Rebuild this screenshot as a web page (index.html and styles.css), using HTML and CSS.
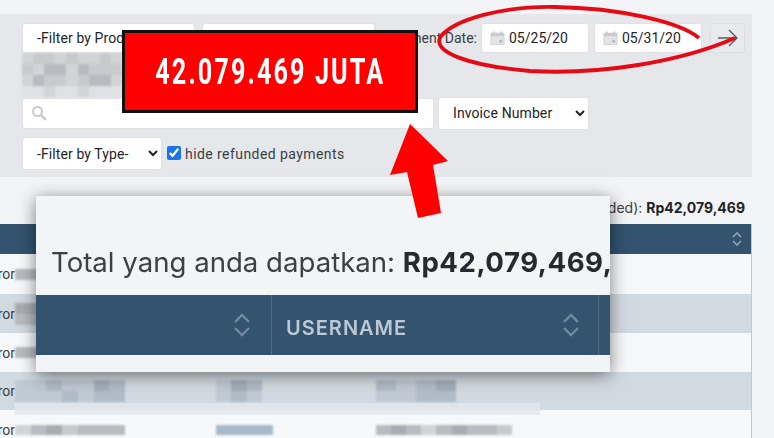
FILE: index.html
```html
<!DOCTYPE html>
<html lang="en">
<head>
    <meta charset="UTF-8">
    <meta name="viewport" content="width=device-width, initial-scale=1.0">
    <title>Payments</title>
    <link rel="stylesheet" href="styles.css">
</head>
<body>
    <div class="filters">
        <div class="filter-row top-row">
            <select class="field product-select"><option>-Filter by Product-</option></select>
            <select class="field product-select"><option>-Filter by Status-</option></select>
            <span class="date-label">Payment Date:</span>
            <div class="field date-field">
                <svg class="cal" viewBox="0 0 16 16"><path d="M1 3h14v12H1z" fill="#e3e4e6" stroke="#cfd1d4"/><path d="M1 2.5h14V6H1z" fill="#c9cbce"/><path d="M4 1v3M12 1v3" stroke="#c9cbce" stroke-width="2"/><rect x="10" y="10" width="3" height="3" fill="#b9bbbe"/></svg>
                05/25/20
            </div>
            <div class="field date-field">
                <svg class="cal" viewBox="0 0 16 16"><path d="M1 3h14v12H1z" fill="#e3e4e6" stroke="#cfd1d4"/><path d="M1 2.5h14V6H1z" fill="#c9cbce"/><path d="M4 1v3M12 1v3" stroke="#c9cbce" stroke-width="2"/><rect x="10" y="10" width="3" height="3" fill="#b9bbbe"/></svg>
                05/31/20
            </div>
            <button class="go-btn">
                <svg viewBox="0 0 22 18" width="22" height="18"><path d="M1 9h19M12 1l8 8-8 8" fill="none" stroke="#55595e" stroke-width="1.3"/></svg>
            </button>
        </div>
        <div class="mosaic top-mosaic">
            <i class="s1"></i><i class="s2"></i><i class="s2"></i><i class="s1"></i><i class="s2"></i><i class="s1"></i><i class="s1"></i><i class="s2"></i><i class="s1"></i>
            <i class="s2"></i><i class="s1"></i><i class="s3"></i><i class="s3"></i><i class="s1"></i><i class="s3"></i><i class="s2"></i><i class="s2"></i><i class="s2"></i>
            <i class="s1"></i><i class="s3"></i><i class="s2"></i><i class="s2"></i><i class="s1"></i><i class="s2"></i><i class="s3"></i><i class="s3"></i><i class="s1"></i>
            <i class="s0"></i><i class="s0"></i><i class="s1"></i><i class="s0"></i><i class="s0"></i><i class="s1"></i><i class="s0"></i><i class="s0"></i><i class="s0"></i>
        </div>
        <div class="filter-row search-row">
            <div class="field search-field">
                <svg viewBox="0 0 16 16" width="16" height="16"><circle cx="6.5" cy="6.5" r="4.5" fill="none" stroke="#c8cacd" stroke-width="2"/><path d="M10 10l5 5" stroke="#c8cacd" stroke-width="2.4"/></svg>
            </div>
            <select class="field number-select"><option>Invoice Number</option></select>
        </div>
        <div class="filter-row type-row">
            <select class="field type-select"><option>-Filter by Type-</option></select>
            <label class="hide-refunded"><input type="checkbox" checked>hide refunded payments</label>
        </div>
    </div>

    <div class="total-line">(rounded): <b>Rp42,079,469</b></div>

    <div class="table">
        <div class="thead">
            <svg class="sort" viewBox="0 0 12 16"><path d="M2 6l4-4 4 4M2 10l4 4 4-4" fill="none" stroke="#8ea2b4" stroke-width="1.6"/></svg>
        </div>
        <div class="trow tall"><span class="clip">ror</span><div class="mosaic cell-mosaic thin"><i class="s3"></i><i class="s3"></i></div></div>
        <div class="trow shade"><span class="clip">ror</span><div class="mosaic cell-mosaic"><i class="s4"></i><i class="s4"></i><i class="s3"></i><i class="s3"></i></div></div>
        <div class="trow"><span class="clip">ror</span><div class="mosaic cell-mosaic thin"><i class="s3"></i><i class="s3"></i></div></div>
        <div class="trow shade short">
            <span class="clip">ror</span>
            <div class="mosaic wide-mosaic">
                <i class="b1"></i><i class="b1"></i><i class="b2"></i><i class="b1"></i><i class="b1"></i><i class="b3"></i><i class="b2"></i>
                <i class="b1"></i><i class="b1"></i><i class="b1"></i><i class="b2"></i><i class="b1"></i><i class="b2"></i><i class="b2"></i>
            </div>
            <div class="mosaic mid-mosaic">
                <i class="b1"></i><i class="b3"></i><i class="b2"></i><i class="b1"></i><i class="b2"></i><i class="b1"></i>
            </div>
            <div class="mosaic end-mosaic">
                <i class="b2"></i><i class="b1"></i><i class="b2"></i><i class="b3"></i><i class="b1"></i><i class="b1"></i><i class="b2"></i><i class="b2"></i>
            </div>
            <div class="smear"></div>
        </div>
        <div class="trow">
            <span class="clip">ror</span>
            <div class="mosaic wide-mosaic thin"><i class="s1"></i><i class="s3"></i><i class="s4"></i><i class="s2"></i><i class="s3"></i><i class="s3"></i><i class="s3"></i></div>
            <div class="bar-link"></div>
            <div class="mosaic end-mosaic thin long"><i class="s3"></i><i class="s4"></i><i class="s3"></i><i class="s1"></i><i class="s3"></i><i class="s4"></i><i class="s3"></i><i class="s3"></i><i class="s2"></i></div>
        </div>
    </div>

    <!-- zoomed callout pasted over the table -->
    <div class="callout">
        <p class="callout-text">Total yang anda dapatkan: <b>Rp42,079,469,</b></p>
        <div class="callout-head">
            <div class="callout-col first">
                <svg viewBox="0 0 18 26" width="18" height="26"><path d="M2 10l7-7 7 7M2 16l7 7 7-7" fill="none" stroke="#6f8aa1" stroke-width="2.4"/></svg>
            </div>
            <div class="callout-col name">
                <span class="callout-label">USERNAME</span>
                <svg viewBox="0 0 18 26" width="18" height="26"><path d="M2 10l7-7 7 7M2 16l7 7 7-7" fill="none" stroke="#6f8aa1" stroke-width="2.4"/></svg>
            </div>
        </div>
    </div>

    <div class="banner"><span class="banner-text">42.079.469 JUTA</span></div>

    <svg class="marks" viewBox="0 0 774 438" width="774" height="438">
        <path d="M699 38C680 22 620 8 555 7C500 6 455 20 441 36C430 52 470 66 530 71C600 75 680 62 735 38" fill="none" stroke="#e60a14" stroke-width="3.8"/>
        <path d="M410 124L448 161L433 165L441 213L418 218L407 172L390 175Z" fill="#fe0000"/>
    </svg>
</body>
</html>
```

FILE: styles.css
```css
* {
    box-sizing: border-box;
}
html, body {
    height: 100%;
}
body {
    margin: 0;
    overflow: hidden;
    position: relative;
    background-color: #f3f4f6;
    font-family: Roboto, "Liberation Sans", sans-serif;
    font-size: 14px;
    color: #1f2328;
}
.filters {
    width: 752px;
    height: 163px;
    margin-top: 14px;
    padding: 9px 0 0 22px;
    background-color: #e5e7ea;
}
.filter-row {
    display: flex;
    align-items: center;
}
.field {
    background-color: #fff;
    border: 1px solid #dfe1e4;
    border-radius: 3px;
    font-family: inherit;
    font-size: 14px;
    color: #1f2328;
}
select.field {
    padding-left: 10px;
    letter-spacing: 0.1px;
}
.top-row {
    height: 30px;
}
.product-select {
    width: 173px;
    height: 30px;
    margin-right: 7px;
}
.date-label {
    width: 95px;
    margin-right: 4px;
    text-align: right;
    color: #3a3e43;
}
.date-field {
    display: flex;
    align-items: center;
    gap: 4px;
    width: 108px;
    height: 30px;
    margin-right: 5px;
    padding-left: 8px;
}
.date-field + .date-field {
    margin-right: 8px;
}
.cal {
    width: 15px;
    height: 16px;
}
.go-btn {
    display: flex;
    align-items: center;
    justify-content: center;
    width: 35px;
    height: 30px;
    padding: 0;
    background-color: #e9eaed;
    border: 1px solid #dcdee1;
    border-radius: 3px;
}
.mosaic {
    display: grid;
    filter: blur(1px);
}
.mosaic i {
    display: block;
}
.s0 { background-color: #dfe1e4; }
.s1 { background-color: #d2d4d8; }
.s2 { background-color: #c8cace; }
.s3 { background-color: #b8bbbf; }
.s4 { background-color: #a9acb0; }
.b1 { background-color: #c0cad3; }
.b2 { background-color: #b0bcc7; }
.b3 { background-color: #a3afba; }
.top-mosaic {
    width: 100px;
    height: 44px;
    grid-template-columns: repeat(9, 1fr);
    grid-template-rows: 11px 11px 11px 11px;
}
.search-row {
    height: 32px;
}
.search-field {
    display: flex;
    align-items: center;
    width: 412px;
    height: 31px;
    margin-right: 4px;
    padding-left: 8px;
}
.number-select {
    width: 151px;
    height: 33px;
}
.type-row {
    margin-top: 8px;
}
.type-select {
    width: 140px;
    height: 33px;
    margin-right: 5px;
}
.hide-refunded {
    display: flex;
    align-items: center;
    color: #3a3e43;
    letter-spacing: 0.43px;
}
.hide-refunded input {
    width: 14px;
    height: 14px;
    margin: 0 4px 2px 0;
    accent-color: #1a73e8;
}
.total-line {
    height: 47px;
    padding: 23px 29px 0 0;
    text-align: right;
    font-family: Inter, "Liberation Sans", sans-serif;
    font-size: 14px;
    line-height: 16px;
    color: #3a3e43;
}
.total-line b {
    color: #1f2328;
}
.table {
    width: 752px;
    background-color: #f7f8f9;
    border-right: 1px solid #c4c8cc;
}
.thead {
    display: flex;
    align-items: center;
    justify-content: flex-end;
    height: 30px;
    padding-right: 8px;
    background-color: #33536f;
}
.sort {
    width: 12px;
    height: 16px;
}
.trow {
    position: relative;
    display: flex;
    align-items: center;
    height: 39px;
}
.trow.tall {
    height: 40px;
}
.trow.short {
    height: 38px;
}
.trow.shade {
    background-color: #d2dae1;
}
.clip {
    width: 15px;
    overflow: hidden;
    direction: rtl;
    white-space: nowrap;
    color: #3a3e43;
}
.cell-mosaic {
    width: 24px;
    height: 22px;
    grid-template-columns: 1fr 1fr;
    grid-template-rows: 1fr 1fr;
}
.cell-mosaic.thin {
    height: 11px;
    grid-template-rows: 1fr;
}
.wide-mosaic {
    width: 110px;
    height: 22px;
    margin-right: 91px;
    grid-template-columns: repeat(7, 1fr);
    grid-template-rows: 1fr 1fr;
}
.wide-mosaic.thin {
    height: 10px;
    grid-template-rows: 1fr;
}
.mid-mosaic {
    width: 46px;
    height: 22px;
    margin-right: 114px;
    grid-template-columns: repeat(3, 1fr);
    grid-template-rows: 1fr 1fr;
}
.end-mosaic {
    width: 80px;
    height: 22px;
    grid-template-columns: repeat(4, 1fr);
    grid-template-rows: 1fr 1fr;
}
.end-mosaic.thin {
    height: 10px;
    grid-template-columns: repeat(9, 1fr);
    grid-template-rows: 1fr;
}
.end-mosaic.long {
    width: 136px;
}
.bar-link {
    width: 57px;
    height: 10px;
    margin-right: 103px;
    background-color: #a9b9c9;
    filter: blur(1px);
}
.smear {
    position: absolute;
    left: 15px;
    top: 31px;
    width: 525px;
    height: 12px;
    background-color: rgba(226, 231, 236, 0.8);
}
.callout {
    position: absolute;
    left: 36px;
    top: 196px;
    width: 574px;
    height: 176px;
    overflow: hidden;
    background-color: #f3f4f6;
    box-shadow: 0 3px 16px rgba(0, 0, 0, 0.5);
}
.callout-text {
    height: 99px;
    margin: 0;
    padding: 50px 0 0 15px;
    white-space: nowrap;
    font-family: Inter, "Liberation Sans", sans-serif;
    font-size: 27.6px;
    line-height: 32px;
    color: #3c4044;
    filter: blur(0.5px);
}
.callout-text b {
    letter-spacing: 0.5px;
    color: #26292d;
}
.callout-head {
    display: flex;
    height: 60px;
    background-color: #33536f;
    filter: blur(0.4px);
}
.callout-col {
    display: flex;
    align-items: center;
    justify-content: flex-end;
    padding-right: 20px;
    border-right: 1px solid #4f6c85;
}
.callout-col.first {
    width: 236px;
}
.callout-col.name {
    justify-content: space-between;
    width: 327px;
    padding: 0 18px 0 14px;
    font-family: Inter, "Liberation Sans", sans-serif;
    font-size: 20px;
    font-weight: 600;
    letter-spacing: 1px;
    color: #bcc8d3;
}
.callout-label {
    padding-top: 6px;
}
.banner {
    position: absolute;
    left: 122px;
    top: 30px;
    display: flex;
    align-items: center;
    justify-content: center;
    width: 296px;
    height: 83px;
    border: 3px solid #111;
    background-color: #fe0000;
    color: #fff;
}
.banner-text {
    flex: none;
    white-space: nowrap;
    font-family: Roboto, "Liberation Sans", sans-serif;
    font-size: 36px;
    font-weight: 700;
    letter-spacing: 3px;
    transform: scaleX(0.7);
}
.marks {
    position: absolute;
    left: 0;
    top: 0;
    pointer-events: none;
}
```
